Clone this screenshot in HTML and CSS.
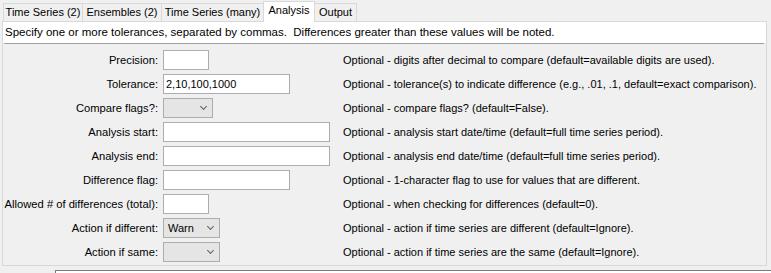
FILE: index.html
```html
<!DOCTYPE html>
<html lang="en">
<head>
  <meta charset="UTF-8">
  <title>Compare Time Series - Analysis</title>
  <link rel="stylesheet" href="styles.css">
</head>
<body>
  <div class="tabs">
    <div class="tab">Time Series (2)</div>
    <div class="tab">Ensembles (2)</div>
    <div class="tab">Time Series (many)</div>
    <div class="tab active">Analysis</div>
    <div class="tab">Output</div>
  </div>

  <div class="panel">
    <div class="intro">Specify one or more tolerances, separated by commas.&nbsp; Differences greater than these values will be noted.</div>

    <div class="form">
      <label>Precision:</label>
      <div><input type="text" class="w-s"></div>
      <div class="desc">Optional - digits after decimal to compare (default=available digits are used).</div>

      <label>Tolerance:</label>
      <div><input type="text" class="w-m" value="2,10,100,1000"></div>
      <div class="desc">Optional - tolerance(s) to indicate difference (e.g., .01, .1, default=exact comparison).</div>

      <label>Compare flags?:</label>
      <div><div class="combo w-c"><span></span><i class="arrow"></i></div></div>
      <div class="desc">Optional - compare flags? (default=False).</div>

      <label>Analysis start:</label>
      <div><input type="text" class="w-l"></div>
      <div class="desc">Optional - analysis start date/time (default=full time series period).</div>

      <label>Analysis end:</label>
      <div><input type="text" class="w-l"></div>
      <div class="desc">Optional - analysis end date/time (default=full time series period).</div>

      <label>Difference flag:</label>
      <div><input type="text" class="w-m"></div>
      <div class="desc">Optional - 1-character flag to use for values that are different.</div>

      <label>Allowed # of differences (total):</label>
      <div><input type="text" class="w-s"></div>
      <div class="desc">Optional - when checking for differences (default=0).</div>

      <label>Action if different:</label>
      <div><div class="combo w-a"><span>Warn</span><i class="arrow"></i></div></div>
      <div class="desc">Optional - action if time series are different (default=Ignore).</div>

      <label>Action if same:</label>
      <div><div class="combo w-a"><span></span><i class="arrow"></i></div></div>
      <div class="desc">Optional - action if time series are the same (default=Ignore).</div>
    </div>
  </div>

  <div class="command"></div>
</body>
</html>
```

FILE: styles.css
```css
html, body {
  height: 273px;
  overflow: hidden;
}

body {
  margin: 0;
  background: #f0f0f0;
  font-family: "Liberation Sans", Arial, sans-serif;
  font-size: 11px;
  color: #000;
}

.tabs {
  display: flex;
  align-items: flex-end;
  height: 21px;
  padding-left: 3px;
}

.tab {
  box-sizing: border-box;
  height: 18px;
  line-height: 17px;
  text-align: center;
  white-space: nowrap;
  border: 1px solid #d9d9d9;
  border-bottom: none;
  border-right: none;
  background: #f0f0f0;
}

.tab:nth-child(1) { width: 79px; }
.tab:nth-child(2) { width: 79px; }
.tab:nth-child(3) { width: 102px; }
.tab:nth-child(4) { width: 52px; }
.tab:nth-child(5) { width: 42px; border-right: 1px solid #d9d9d9; }

.tab.active {
  height: 21px;
  line-height: 17px;
  margin-bottom: -1px;
  background: #fff;
  border-right: 1px solid #d9d9d9;
  position: relative;
  z-index: 1;
}

.tab.active + .tab {
  border-left: none;
}

.panel {
  margin: 0 4px 0 2px;
  border: 1px solid #d9d9d9;
}

.intro {
  background: #fff;
  height: 21px;
  line-height: 21px;
  padding-left: 2px;
  font-size: 11.5px;
  position: relative;
}

.intro::after {
  content: "";
  position: absolute;
  left: 1px;
  right: 2px;
  bottom: -1px;
  height: 1px;
  background: #a0a0a0;
}

.form {
  display: grid;
  grid-template-columns: 155px 180px 1fr;
  column-gap: 5px;
  row-gap: 4px;
  grid-auto-rows: 20px;
  padding: 6px 0 3px;
  margin-top: 1px;
}

.form label {
  text-align: right;
  line-height: 20px;
  white-space: nowrap;
  font-size: 11.2px;
}

.form .desc {
  line-height: 20px;
  margin-left: -5px;
  white-space: nowrap;
}

input {
  box-sizing: border-box;
  height: 20px;
  margin: 0;
  padding: 0 2px;
  border: 1px solid #abadb3;
  background: #fff;
  font-family: inherit;
  font-size: 11px;
  color: #000;
  outline: none;
}

.w-s { width: 46px; }
.w-m { width: 127px; }
.w-l { width: 167px; }

.combo {
  box-sizing: border-box;
  height: 20px;
  display: flex;
  align-items: center;
  justify-content: space-between;
  padding: 0 6px 0 4px;
  border: 1px solid #adadad;
  background: #e5e5e5;
}

.w-c { width: 50px; }
.w-a { width: 57px; }

.arrow {
  width: 4px;
  height: 4px;
  border-right: 1px solid #606060;
  border-bottom: 1px solid #606060;
  transform: rotate(45deg);
  margin-top: -3px;
}

.command {
  box-sizing: border-box;
  margin: 4px 0 0 55px;
  height: 3px;
  border-top: 1px solid #7a7a7a;
  border-left: 1px solid #7a7a7a;
  background: #fff;
}
```
